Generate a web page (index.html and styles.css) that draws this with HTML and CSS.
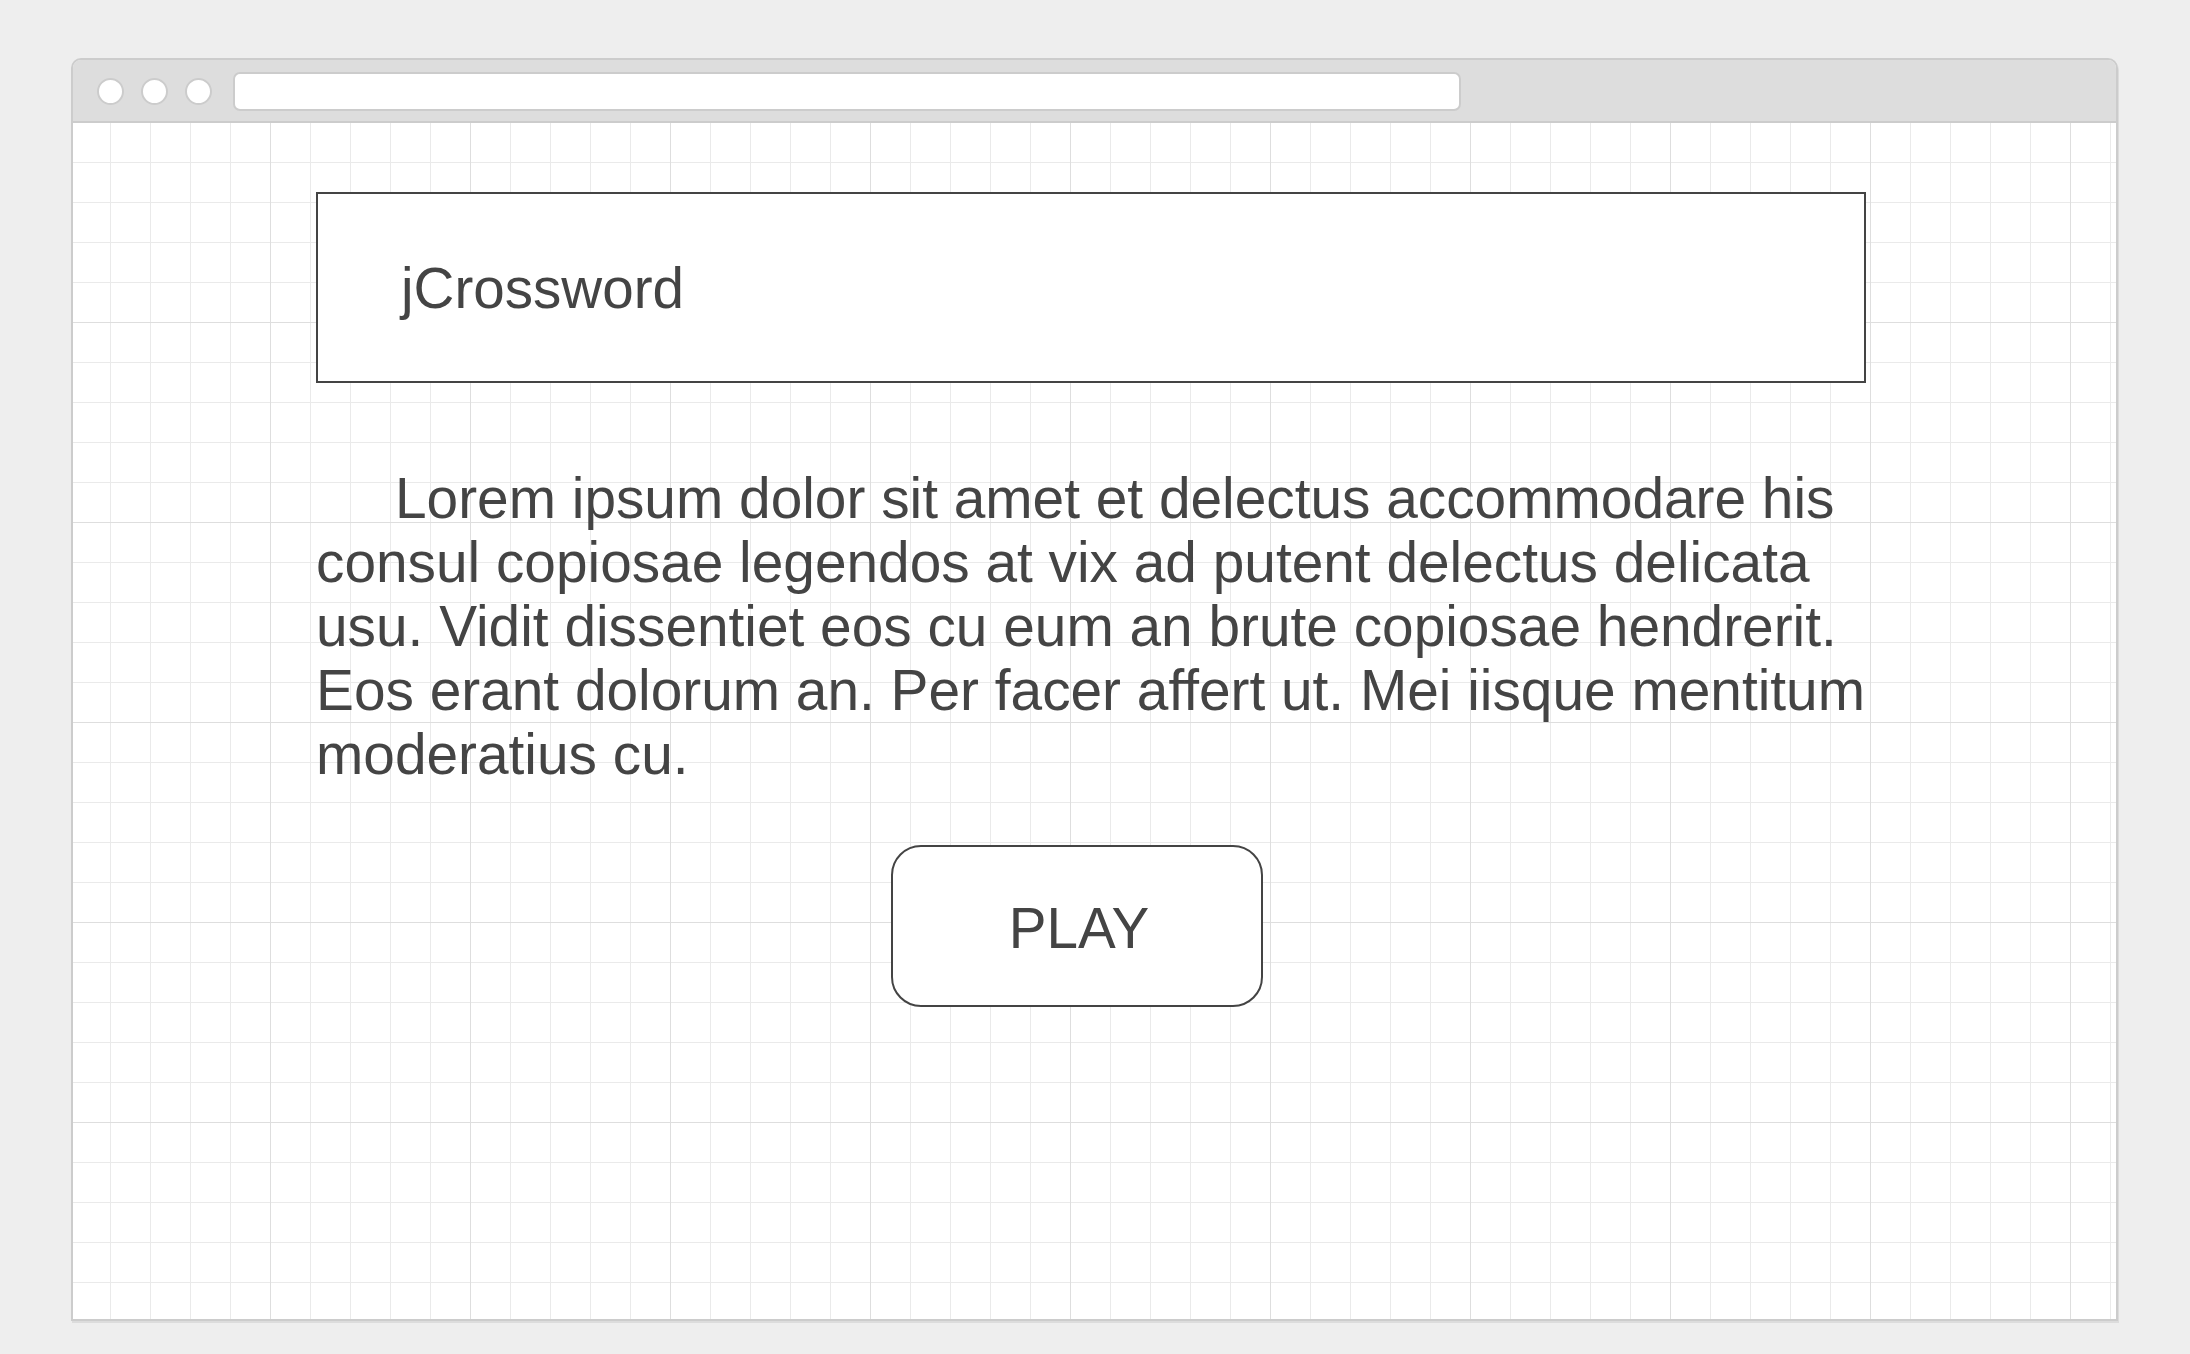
FILE: index.html
```html
<!DOCTYPE html>
<html lang="en">
<head>
<meta charset="utf-8">
<title>jCrossword</title>
<link rel="stylesheet" href="styles.css">
</head>
<body>
<div class="window">
  <div class="titlebar">
    <span class="dot"></span>
    <span class="dot"></span>
    <span class="dot"></span>
    <div class="urlbar"></div>
  </div>
  <div class="viewport">
    <div class="column">
      <div class="header"><span class="title">jCrossword</span></div>
      <p class="lorem">Lorem ipsum dolor sit amet et delectus accommodare his consul copiosae legendos at vix ad putent delectus delicata usu. Vidit dissentiet eos cu eum an brute copiosae hendrerit. Eos erant dolorum an. Per facer affert ut. Mei iisque mentitum moderatius cu.</p>
      <div class="play">PLAY</div>
    </div>
  </div>
</div>
</body>
</html>
```
FILE: styles.css
```css
html, body {
  margin: 0;
  padding: 0;
  background: #eeeeee;
}

body {
  font-family: "Liberation Sans", Arial, sans-serif;
  color: #444444;
  padding-top: 58px;
  height: 1354px;
  box-sizing: border-box;
}

.window {
  box-sizing: border-box;
  margin-left: 71px;
  width: 2047px;
  height: 1263px;
  border: 2px solid #cccccc;
  border-radius: 10px 10px 0 0;
  box-shadow: 1px 2px 0 #dcdcdc;
  display: flex;
  flex-direction: column;
  overflow: hidden;
}

.titlebar {
  box-sizing: border-box;
  height: 63px;
  flex: 0 0 63px;
  background: #dddddd;
  border-bottom: 2px solid #cccccc;
  display: flex;
  align-items: center;
  padding: 2px 0 0 24px;
  gap: 17px;
}

.dot {
  box-sizing: border-box;
  width: 27px;
  height: 27px;
  border-radius: 50%;
  background: #ffffff;
  border: 2px solid #cccccc;
  flex: 0 0 27px;
}

.urlbar {
  box-sizing: border-box;
  margin-left: 4px;
  width: 1228px;
  height: 39px;
  background: #ffffff;
  border: 2px solid #cccccc;
  border-radius: 7px;
}

.viewport {
  flex: 1;
  background-color: #ffffff;
  background-image:
    linear-gradient(to right, #dedede 1px, transparent 1px),
    linear-gradient(to bottom, #dedede 1px, transparent 1px),
    linear-gradient(to right, #eaeaea 1px, transparent 1px),
    linear-gradient(to bottom, #eaeaea 1px, transparent 1px);
  background-size: 200px 200px, 200px 200px, 40px 40px, 40px 40px;
  background-position: -3px -1px;
}

.column {
  padding: 69px 0 0 243px;
}

.header {
  box-sizing: border-box;
  width: 1550px;
  height: 191px;
  border: 2px solid #444444;
  background: #ffffff;
  display: flex;
  align-items: center;
  padding: 2px 0 0 83px;
}

.title {
  font-size: 56.6px;
  line-height: 64px;
}

.lorem {
  margin: 84px 0 0 0;
  width: 1575px;
  font-size: 56.8px;
  line-height: 64px;
  text-indent: 79px;
}

.play {
  box-sizing: border-box;
  width: 372px;
  height: 162px;
  margin: 58px 0 0 575px;
  border: 2px solid #444444;
  border-radius: 30px;
  background: #ffffff;
  display: flex;
  align-items: center;
  justify-content: center;
  font-size: 56.6px;
  padding: 5px 0 0 4px;
}
```
